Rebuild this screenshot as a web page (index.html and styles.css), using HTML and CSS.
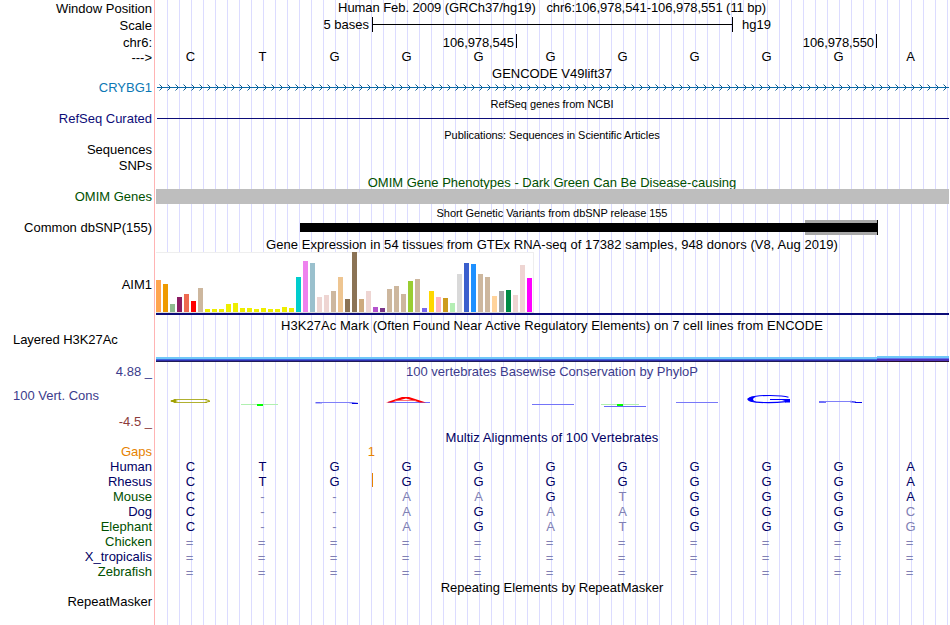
FILE: index.html
```html
<!DOCTYPE html>
<html lang="en">
<head>
    <meta charset="UTF-8">
    <title>Human chr6:106,978,541-106,978,551</title>
    <link rel="stylesheet" href="styles.css">
</head>
<body>
<main class="browser">

    <!-- ruler -->
    <div class="row ruler">
        <div class="label">Window Position</div>
        <div class="track title position">Human Feb. 2009 (GRCh37/hg19) &nbsp; chr6:106,978,541-106,978,551 (11 bp)</div>
    </div>
    <div class="row ruler">
        <div class="label">Scale</div>
        <div class="track scale">
            <span class="scale-size">5 bases</span>
            <span class="scale-bar"></span>
            <span class="scale-db">hg19</span>
        </div>
    </div>
    <div class="row coords">
        <div class="label">chr6:</div>
        <div class="track ticks">
            <span class="tick">106,978,545</span>
            <span class="tick">106,978,550</span>
        </div>
    </div>
    <div class="row ruler">
        <div class="label">---&gt;</div>
        <div class="track bases">
            <span>C</span><span>T</span><span>G</span><span>G</span><span>G</span><span>G</span><span>G</span><span>G</span><span>G</span><span>G</span><span>A</span>
        </div>
    </div>

    <!-- genes -->
    <div class="heading">GENCODE V49lift37</div>
    <div class="row">
        <div class="label gencode">CRYBG1</div>
        <div class="track">
            <svg class="gene" width="792" height="18">
                <defs>
                    <pattern id="arrows" width="8" height="18" patternUnits="userSpaceOnUse">
                        <path d="M2.500 5.500 L5.500 8.500 L2.500 11.500" fill="none" stroke="#0c5c93" stroke-width="1"/>
                    </pattern>
                </defs>
                <rect x="0" y="8" width="792" height="1" fill="#0c6ba8"/>
                <rect x="0" y="0" width="792" height="18" fill="url(#arrows)"/>
            </svg>
        </div>
    </div>
    <div class="heading small">RefSeq genes from NCBI</div>
    <div class="row">
        <div class="label refseq">RefSeq Curated</div>
        <div class="track"><div class="refseq-line"></div></div>
    </div>
    <div class="heading small">Publications: Sequences in Scientific Articles</div>
    <div class="row short"><div class="label">Sequences</div></div>
    <div class="row"><div class="label">SNPs</div></div>
    <div class="heading omim">OMIM Gene Phenotypes - Dark Green Can Be Disease-causing</div>
    <div class="row">
        <div class="label omim">OMIM Genes</div>
        <div class="track"><div class="omim-bar"></div></div>
    </div>
    <div class="heading small">Short Genetic Variants from dbSNP release 155</div>
    <div class="row">
        <div class="label">Common dbSNP(155)</div>
        <div class="track">
            <svg class="snps" width="794" height="18" shape-rendering="crispEdges">
                <rect x="650" y="1" width="72" height="15" fill="#a8a8a8"/>
                <rect x="145" y="4" width="577" height="9" fill="#000"/>
                <rect x="722" y="1" width="1" height="15" fill="#000"/>
            </svg>
        </div>
    </div>

    <!-- expression -->
    <div class="heading wide">Gene Expression in 54 tissues from GTEx RNA-seq of 17382 samples, 948 donors (V8, Aug 2019)</div>
    <div class="row gtex">
        <div class="label">AIM1</div>
        <div class="track">
            <div class="bars">
                <i style="height:32px;background:#ffa54f"></i>
                <i style="height:28px;background:#ee9a00"></i>
                <i style="height:8px;background:#8fbc8f"></i>
                <i style="height:15px;background:#8b1c62"></i>
                <i style="height:18px;background:#ee6a50"></i>
                <i style="height:11px;background:#ff0000"></i>
                <i style="height:24px;background:#cdb79e"></i>
                <i style="height:3px;background:#eeee00"></i>
                <i style="height:3px;background:#eeee00"></i>
                <i style="height:3px;background:#eeee00"></i>
                <i style="height:8px;background:#eeee00"></i>
                <i style="height:9px;background:#eeee00"></i>
                <i style="height:4px;background:#eeee00"></i>
                <i style="height:4px;background:#eeee00"></i>
                <i style="height:3px;background:#eeee00"></i>
                <i style="height:4px;background:#eeee00"></i>
                <i style="height:3px;background:#eeee00"></i>
                <i style="height:3px;background:#eeee00"></i>
                <i style="height:5px;background:#eeee00"></i>
                <i style="height:4px;background:#eeee00"></i>
                <i style="height:35px;background:#00cdcd"></i>
                <i style="height:51px;background:#ee82ee"></i>
                <i style="height:49px;background:#9ac0cd"></i>
                <i style="height:15px;background:#eed5d2"></i>
                <i style="height:17px;background:#eed5d2"></i>
                <i style="height:21px;background:#cdb79e"></i>
                <i style="height:35px;background:#eec591"></i>
                <i style="height:13px;background:#8b7355"></i>
                <i style="height:60px;background:#8b7355"></i>
                <i style="height:13px;background:#cdaa7d"></i>
                <i style="height:21px;background:#eed5d2"></i>
                <i style="height:5px;background:#b452cd"></i>
                <i style="height:4px;background:#7a378b"></i>
                <i style="height:23px;background:#cdb79e"></i>
                <i style="height:26px;background:#cdb79e"></i>
                <i style="height:18px;background:#cdb79e"></i>
                <i style="height:31px;background:#9acd32"></i>
                <i style="height:33px;background:#cdb79e"></i>
                <i style="height:4px;background:#7a67ee"></i>
                <i style="height:21px;background:#ffd700"></i>
                <i style="height:15px;background:#ffb6c1"></i>
                <i style="height:14px;background:#cd9b1d"></i>
                <i style="height:9px;background:#b4eeb4"></i>
                <i style="height:38px;background:#d9d9d9"></i>
                <i style="height:49px;background:#3a5fcd"></i>
                <i style="height:48px;background:#1e90ff"></i>
                <i style="height:38px;background:#cdb79e"></i>
                <i style="height:35px;background:#cdb79e"></i>
                <i style="height:16px;background:#ffd39b"></i>
                <i style="height:21px;background:#a6a6a6"></i>
                <i style="height:22px;background:#008b45"></i>
                <i style="height:17px;background:#eed5d2"></i>
                <i style="height:47px;background:#eed5d2"></i>
                <i style="height:34px;background:#ff00ff"></i>
            </div>
            <div class="gene-model"></div>
        </div>
    </div>

    <!-- regulation -->
    <div class="heading wide">H3K27Ac Mark (Often Found Near Active Regulatory Elements) on 7 cell lines from ENCODE</div>
    <div class="row h3k27ac">
        <div class="label left">Layered H3K27Ac</div>
        <div class="track">
            <svg class="signal" width="793" height="6" shape-rendering="crispEdges">
                <rect x="0" y="1" width="721" height="2" fill="#70c8f8"/>
                <rect x="0" y="3" width="721" height="1" fill="#4068e0"/>
                <rect x="0" y="4" width="721" height="1" fill="#3030b0"/>
                <rect x="0" y="5" width="721" height="1" fill="#201c58"/>
                <rect x="721" y="0" width="72" height="2" fill="#70c8f8"/>
                <rect x="721" y="2" width="72" height="1" fill="#6078f0"/>
                <rect x="721" y="3" width="72" height="2" fill="#4c30b8"/>
                <rect x="721" y="5" width="72" height="1" fill="#281030"/>
            </svg>
        </div>
    </div>

    <!-- conservation -->
    <div class="row cons">
        <div class="label cons-labels">
            <span class="max">4.88 _</span>
            <span class="name">100 Vert. Cons</span>
            <span class="min">-4.5 _</span>
        </div>
        <div class="track">
            <div class="title phylop">100 vertebrates Basewise Conservation by PhyloP</div>
            <svg class="logos" width="794" height="20" viewBox="155 390 794 20">
                <g fill="none" stroke="#a0a000">
                    <path d="M174 399.5 H207 M174 402.5 H207" stroke="#b0b030"/>
                    <path d="M176 399.7 L171 401 L176 402.3 M205 399.7 L209.5 400.5 M205 402.4 L210 401.3"/>
                </g>
                <path d="M170 401 L174 399.4 L178 401 L174 402.6 Z" fill="#a0a000"/>
                <rect x="241" y="404" width="37" height="1" fill="#b0f0b0"/>
                <rect x="257" y="404" width="6" height="2" fill="#00ff00"/>
                <path d="M315.5 402.8 H322 M349 402.6 L358 403.4" stroke="#2020f0" fill="none"/>
                <path d="M320 402.5 H352" stroke="#8080f8" fill="none"/>
                <path d="M352 403.5 H358" stroke="#0000e0" fill="none"/>
                <rect x="388" y="402" width="42" height="1" fill="#7070ff"/>
                <path d="M386 402.5 L402 397 H409 L426 402.5 H420 L406 398.4 L391 402.5 Z" fill="#ff0000"/>
                <path d="M395 400.5 H416" stroke="#ff5050" stroke-width="0.8"/>
                <rect x="532" y="404" width="42" height="1" fill="#7474f8"/>
                <rect x="601" y="404" width="38" height="1" fill="#b0f0b0"/>
                <rect x="617" y="404" width="6" height="2" fill="#00ff00"/>
                <rect x="604" y="406" width="42" height="1" fill="#6868f8"/>
                <rect x="676" y="402" width="42" height="1" fill="#7878f8"/>
                <path d="M788.5 397.3 C782 394.9 758 394.6 750.5 397.6 C746 399.2 748 401.3 756 402.1 C764 402.8 776 402.8 786 401.6" stroke="#0000ff" stroke-width="1.1" fill="none"/>
                <path d="M747 399 L751 396.8 H756 C752 398.5 752 400.5 757 402.2 L751 401.5 Z" fill="#0000ff"/>
                <path d="M770 399 H790 V402.6 H785 V401 L782 400 H770 Z" fill="#0000ff"/>
                <path d="M819 402 H826 M850 401.6 L856 402.3" stroke="#4040f8" stroke-width="1.5" fill="none"/>
                <path d="M824 401.5 H852" stroke="#8080f8" fill="none"/>
                <path d="M855 402.5 H862" stroke="#0000e8" fill="none"/>
            </svg>
        </div>
    </div>

    <!-- alignments -->
    <div class="heading navy wide">Multiz Alignments of 100 Vertebrates</div>
    <div class="row species">
        <div class="label gaps">Gaps</div>
        <div class="track"><span class="gap-size">1</span></div>
    </div>
    <div class="row species navy">
        <div class="label">Human</div>
        <div class="track bases">
            <span>C</span><span>T</span><span>G</span><span>G</span><span>G</span><span>G</span><span>G</span><span>G</span><span>G</span><span>G</span><span>A</span>
        </div>
    </div>
    <div class="row species navy">
        <div class="label">Rhesus</div>
        <div class="track bases insert">
            <span>C</span><span>T</span><span>G</span><span>G</span><span>G</span><span>G</span><span>G</span><span>G</span><span>G</span><span>G</span><span>A</span>
        </div>
    </div>
    <div class="row species navy">
        <div class="label green">Mouse</div>
        <div class="track bases">
            <span>C</span><b>-</b><b>-</b><b>A</b><b>A</b><span>G</span><b>T</b><span>G</span><span>G</span><span>G</span><span>A</span>
        </div>
    </div>
    <div class="row species navy">
        <div class="label">Dog</div>
        <div class="track bases">
            <span>C</span><b>-</b><b>-</b><b>A</b><span>G</span><b>A</b><b>A</b><span>G</span><span>G</span><span>G</span><b>C</b>
        </div>
    </div>
    <div class="row species navy">
        <div class="label green">Elephant</div>
        <div class="track bases">
            <span>C</span><b>-</b><b>-</b><b>A</b><span>G</span><b>A</b><b>T</b><span>G</span><span>G</span><span>G</span><b>G</b>
        </div>
    </div>
    <div class="row species navy">
        <div class="label green">Chicken</div>
        <div class="track bases missing">
            <b>=</b><b>=</b><b>=</b><b>=</b><b>=</b><b>=</b><b>=</b><b>=</b><b>=</b><b>=</b><b>=</b>
        </div>
    </div>
    <div class="row species navy">
        <div class="label">X_tropicalis</div>
        <div class="track bases missing">
            <b>=</b><b>=</b><b>=</b><b>=</b><b>=</b><b>=</b><b>=</b><b>=</b><b>=</b><b>=</b><b>=</b>
        </div>
    </div>
    <div class="row species navy">
        <div class="label green">Zebrafish</div>
        <div class="track bases missing">
            <b>=</b><b>=</b><b>=</b><b>=</b><b>=</b><b>=</b><b>=</b><b>=</b><b>=</b><b>=</b><b>=</b>
        </div>
    </div>

    <div class="heading repeats">Repeating Elements by RepeatMasker</div>
    <div class="row"><div class="label">RepeatMasker</div></div>

</main>
</body>
</html>
```
FILE: styles.css
```css
* {
    box-sizing: border-box;
}

body {
    margin: 0;
    background: #fff;
    color: #000;
    font: 13px/15px "Liberation Sans", Arial, sans-serif;
}

/* white label area, red divider, then a guide line every 12px */
.browser {
    width: 949px;
    height: 625px;
    overflow: hidden;
    background:
        linear-gradient(#ffb4b4, #ffb4b4) 154px 0 / 1px 100% no-repeat,
        linear-gradient(#fff, #fff) 0 0 / 156px 100% no-repeat,
        linear-gradient(to right, #dcdcff 1px, transparent 1px) 11px 0 / 12px 100%;
}

.row {
    display: flex;
    height: 18px;
}

.row.short {
    height: 16px;
}

.row.ruler {
    height: 17px;
}

.row.coords {
    height: 15px;
}

.row.species {
    height: 15px;
}

.label {
    flex: none;
    width: 155px;
    padding: 1px 3px 0 0;
    text-align: right;
    white-space: nowrap;
}

.label.left {
    padding-left: 13px;
    text-align: left;
    letter-spacing: -0.05px;
}

.track {
    flex: none;
    width: 794px;
}

.heading {
    height: 13px;
    margin-left: 155px;
    text-align: center;
    white-space: nowrap;
}

.title {
    text-align: center;
}

.position {
    letter-spacing: -0.06px;
}

.wide {
    letter-spacing: 0.05px;
}

.small {
    font-size: 11px;
    letter-spacing: -0.05px;
}

.navy {
    color: #000064;
}

.green,
.omim {
    color: #005000;
}

/* ruler */
.scale {
    display: flex;
}

.scale-size {
    width: 214px;
    text-align: right;
}

.scale-bar {
    width: 361px;
    height: 15px;
    margin-left: 3px;
    border-left: 1px solid #000;
    border-right: 1px solid #000;
    background: linear-gradient(#000, #000) 0 7px / 100% 1px no-repeat;
}

.scale-db {
    margin-left: 9px;
}

.ticks {
    display: flex;
}

.tick {
    height: 14px;
    padding: 1px 2px 0 0;
    border-right: 1px solid #000;
    width: 360px;
    text-align: right;
    letter-spacing: -0.1px;
}

.tick:first-child {
    width: 362px;
}

.bases {
    display: grid;
    grid-template-columns: repeat(11, 72px);
    text-align: center;
}

.bases span,
.bases b {
    padding-right: 1px;
}

.bases b {
    font-weight: normal;
    color: #8080b4;
}

/* genes */
.gencode {
    color: #0c78b4;
}

.gene {
    display: block;
    margin-left: 2px;
}

.refseq {
    color: #0c0c78;
}

.refseq-line {
    height: 1px;
    margin: 8px 0 0 2px;
    background: #0c0c78;
}

.omim-bar {
    height: 15px;
    margin: 1px 0 0 1px;
    background: #bebebe;
}

.snps {
    display: block;
}

/* expression */
.row.gtex {
    height: 68px;
}

.gtex .label {
    padding-top: 27px;
}

.bars {
    display: flex;
    align-items: flex-end;
    gap: 2px;
    width: 378px;
    height: 61px;
    margin: 2px 0 0 1px;
    background: #fff;
    border: solid #eee;
    border-width: 1px 1px 1px 0;
    border-bottom-color: #ddd;
}

.bars i {
    flex: none;
    width: 5px;
}

.gene-model {
    height: 2px;
    margin-left: 1px;
    background: #0c0c78;
}

/* regulation */
.row.h3k27ac {
    height: 31px;
}

.signal {
    display: block;
    margin: 25px 0 0 1px;
}

/* conservation */
.row.cons {
    height: 68px;
}

.cons-labels {
    display: flex;
    flex-direction: column;
    padding-top: 2px;
    color: #3c3c8c;
}

.cons-labels .name {
    padding: 9px 0 11px 13px;
    text-align: left;
}

.cons-labels .min {
    color: #8c3c3c;
}

.phylop {
    padding-top: 2px;
    color: #3c3c8c;
}

.logos {
    display: block;
    margin-top: 11px;
}

/* alignments */
.species .track {
    padding-top: 1px;
}

.species .missing {
    padding-top: 2px;
}

.missing b {
    padding-right: 3px;
}

.label.gaps,
.gap-size {
    color: #e68200;
}

.gap-size {
    display: block;
    width: 220px;
    text-align: right;
}

.insert {
    background: linear-gradient(#e68200, #e68200) 217px 0 / 1px 14px no-repeat;
}

.heading.repeats {
    height: 15px;
    padding-top: 2px;
}
```
